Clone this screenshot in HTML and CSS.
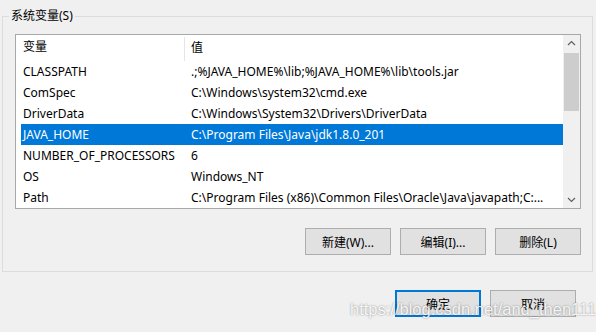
FILE: index.html
```html
<!DOCTYPE html>
<html>
<head>
<title>环境变量</title>
<meta charset="UTF-8">
<meta name="viewport" content="width=device-width, initial-scale=1.0">
<link rel="stylesheet" href="styles.css">
</head>
<body>

<fieldset class="group">
  <legend>系统变量(S)</legend>

  <div class="list">
    <div class="rows">
      <div class="row head">
        <div class="name">变量</div>
        <div class="value">值</div>
      </div>
      <div class="row"><div class="name">CLASSPATH</div><div class="value">.;%JAVA_HOME%\lib;%JAVA_HOME%\lib\tools.jar</div></div>
      <div class="row"><div class="name">ComSpec</div><div class="value">C:\Windows\system32\cmd.exe</div></div>
      <div class="row"><div class="name">DriverData</div><div class="value">C:\Windows\System32\Drivers\DriverData</div></div>
      <div class="row selected"><div class="name">JAVA_HOME</div><div class="value">C:\Program Files\Java\jdk1.8.0_201</div></div>
      <div class="row"><div class="name">NUMBER_OF_PROCESSORS</div><div class="value">6</div></div>
      <div class="row"><div class="name">OS</div><div class="value">Windows_NT</div></div>
      <div class="row"><div class="name">Path</div><div class="value">C:\Program Files (x86)\Common Files\Oracle\Java\javapath;C:...</div></div>
    </div>
    <div class="scrollbar">
      <svg class="arrow" width="17" height="17" viewBox="0 0 17 17"><path d="M5 10 L8.5 6.5 L12 10" fill="none" stroke="#606060" stroke-width="1.2"/></svg>
      <div class="track"><div class="thumb"></div></div>
      <svg class="arrow" width="17" height="17" viewBox="0 0 17 17"><path d="M5 7 L8.5 10.5 L12 7" fill="none" stroke="#606060" stroke-width="1.2"/></svg>
    </div>
  </div>

  <div class="actions">
    <button>新建(W)...</button>
    <button>编辑(I)...</button>
    <button>删除(L)</button>
  </div>
</fieldset>

<div class="footer">
  <button class="default">确定</button>
  <button>取消</button>
</div>

<div class="watermark">https://blog.csdn.net/and_then111</div>

</body>
</html>
```

FILE: styles.css
```css
* {
  box-sizing: border-box;
}
html {
  background: #f0f0f0;
}
body {
  margin: 0;
  padding: 8px 0 0 0;
  font-family: "Noto Sans", "Noto Sans CJK SC", sans-serif;
  font-size: 12px;
  color: #000;
  position: relative;
  height: 332px;
  overflow: hidden;
}
fieldset.group {
  margin: 0 3px 0 2px;
  padding: 10px 11px 16px 12px;
  border: 1px solid #dcdcdc;
  min-width: 0;
}
legend {
  margin-left: -6px;
  padding: 0 2px;
  line-height: 16px;
}
.list {
  display: flex;
  height: 175px;
  background: #fff;
  border: 1px solid #a8a8a8;
}
.rows {
  flex: 1;
  min-width: 0;
  padding-left: 5px;
}
.row {
  display: flex;
  height: 21px;
  line-height: 21px;
  white-space: nowrap;
}
.row.head {
  height: 26px;
  line-height: 24px;
}
.name {
  width: 163px;
  padding-left: 2px;
  flex-shrink: 0;
}
.value {
  flex: 1;
  min-width: 0;
  padding-left: 7px;
  padding-right: 6px;
  overflow: hidden;
}
.head .value {
  border-left: 1px solid #e5e5e5;
  margin-top: 2px;
  padding-left: 6px;
  line-height: 22px;
}
.row.selected {
  background: #0078d7;
  color: #fff;
}
.scrollbar {
  width: 17px;
  display: flex;
  flex-direction: column;
  background: #f0f0f0;
}
.arrow {
  display: block;
  flex-shrink: 0;
}
.track {
  flex: 1;
  padding: 1px 1px 0 1px;
}
.thumb {
  height: 58px;
  background: #cdcdcd;
}
.actions {
  display: flex;
  justify-content: flex-end;
  gap: 9px;
  margin-top: 19px;
}
button {
  width: 86px;
  height: 27px;
  font-family: "Noto Sans", "Noto Sans CJK SC", sans-serif;
  font-size: 12px;
  color: #000;
  background: #e1e1e1;
  border: 1px solid #adadad;
  border-radius: 0;
  padding: 0;
}
button.default {
  border: 2px solid #0078d7;
}
.footer {
  display: flex;
  justify-content: flex-end;
  gap: 9px;
  margin: 18px 20px 0 0;
}
.watermark {
  position: absolute;
  left: 350px;
  top: 300px;
  font-family: "Liberation Sans", sans-serif;
  font-size: 16.5px;
  color: rgba(255, 255, 255, 0.9);
  text-shadow: 0 0 2px rgba(0, 0, 0, 0.45);
  white-space: nowrap;
}
```
